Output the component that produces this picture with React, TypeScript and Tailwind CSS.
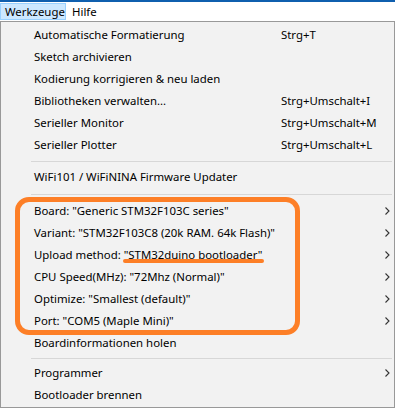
import React from 'react';

type Item =
  | { kind: 'item'; label: string; shortcut?: string; sub?: boolean }
  | { kind: 'sep'; h: string };

const items: Item[] = [
  { kind: 'item', label: 'Automatische Formatierung', shortcut: 'Strg+T' },
  { kind: 'item', label: 'Sketch archivieren' },
  { kind: 'item', label: 'Kodierung korrigieren & neu laden' },
  { kind: 'item', label: 'Bibliotheken verwalten...', shortcut: 'Strg+Umschalt+I' },
  { kind: 'item', label: 'Serieller Monitor', shortcut: 'Strg+Umschalt+M' },
  { kind: 'item', label: 'Serieller Plotter', shortcut: 'Strg+Umschalt+L' },
  { kind: 'sep', h: 'h-[10px]' },
  { kind: 'item', label: 'WiFi101 / WiFiNINA Firmware Updater' },
  { kind: 'sep', h: 'h-[12px]' },
  { kind: 'item', label: 'Board: "Generic STM32F103C series"', sub: true },
  { kind: 'item', label: 'Variant: "STM32F103C8 (20k RAM. 64k Flash)"', sub: true },
  { kind: 'item', label: 'Upload method: "STM32duino bootloader"', sub: true },
  { kind: 'item', label: 'CPU Speed(MHz): "72Mhz (Normal)"', sub: true },
  { kind: 'item', label: 'Optimize: "Smallest (default)"', sub: true },
  { kind: 'item', label: 'Port: "COM5 (Maple Mini)"', sub: true },
  { kind: 'item', label: 'Boardinformationen holen' },
  { kind: 'sep', h: 'h-[8px]' },
  { kind: 'item', label: 'Programmer', sub: true },
  { kind: 'item', label: 'Bootloader brennen' },
];

const Chevron = () => (
  <svg width="5" height="8" viewBox="0 0 5 8" className="shrink-0">
    <path d="M0.5 0.5 L4 4 L0.5 7.5" fill="none" stroke="#333" strokeWidth="1.1" />
  </svg>
);

export default function App() {
  return (
    <div className="relative h-[409px] w-[395px] overflow-hidden bg-white font-['Noto_Sans',sans-serif] text-[11.4px] text-black">
      <div className="h-[2px] bg-[#0f5fae]" />
      <div className="flex h-[19px] items-start">
        <div className="mt-px flex h-[17px] w-[66px] items-center border border-[#99d1ff] bg-[#cce8ff] pl-[4px]">
          Werkzeuge
        </div>
        <div className="mt-px flex h-[17px] items-center pl-[6px]">Hilfe</div>
      </div>

      <div className="relative h-[387px] w-[395px] border border-[#999999] bg-[#f2f2f2] pt-[2px]">
        {items.map((item, i) =>
          item.kind === 'sep' ? (
            <div key={i} className={`${item.h} flex items-center pl-[30px] pr-[2px]`}>
              <div className="h-px w-full bg-[#d7d7d7]" />
            </div>
          ) : (
            <div key={i} className="flex h-[22px] items-center whitespace-nowrap pl-[33px] pr-[4px] leading-none">
              <span className="w-[247px] shrink-0">{item.label}</span>
              {item.shortcut && <span>{item.shortcut}</span>}
              {item.sub && (
                <span className="ml-auto">
                  <Chevron />
                </span>
              )}
            </div>
          ),
        )}

        {/* orange annotation */}
        <div className="pointer-events-none absolute left-[14px] top-[175px] h-[138px] w-[285px] rounded-[14px] border-[5px] border-[#fd7f27]" />
        <div className="pointer-events-none absolute left-[122px] top-[237px] h-[4px] w-[141px] rounded-full bg-[#fd7f27]" />
      </div>
    </div>
  );
}
